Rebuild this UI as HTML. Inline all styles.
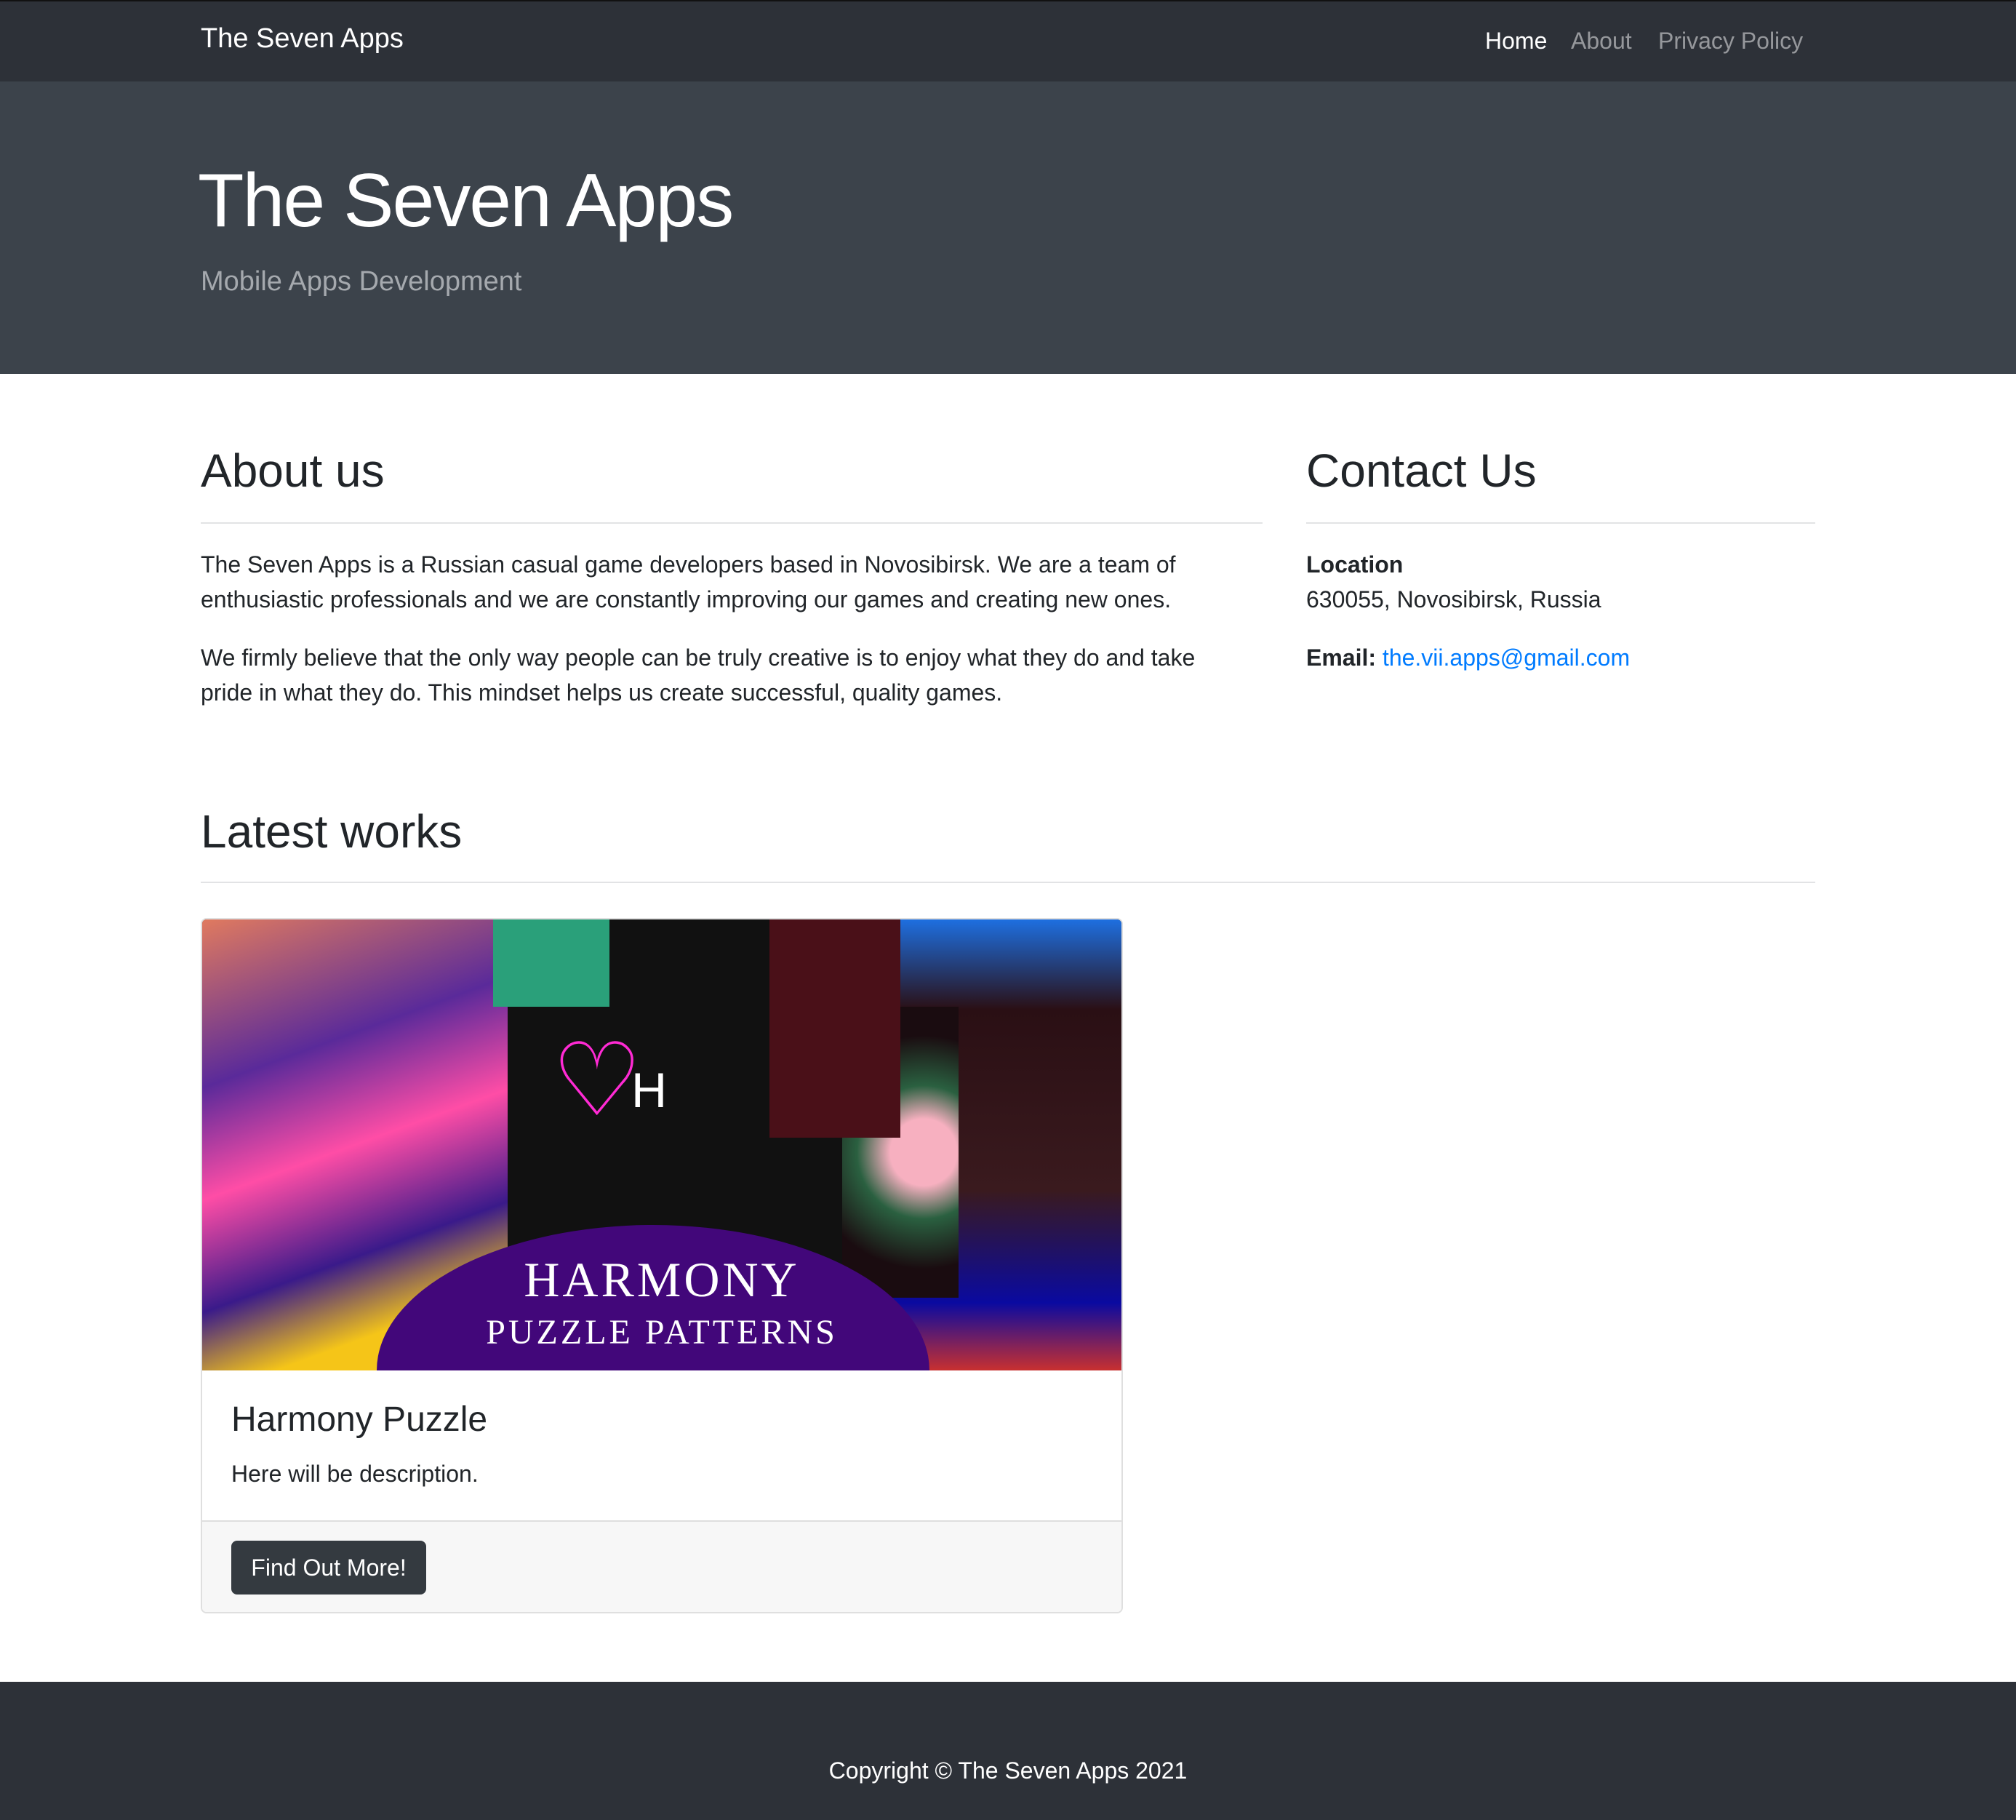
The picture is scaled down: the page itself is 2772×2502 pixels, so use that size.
<!DOCTYPE html>
<html><head><meta charset="utf-8"><style>
html{zoom:2}
body{margin:0;width:1386px;height:1251px;position:relative;font-family:"Liberation Sans",sans-serif;color:#212529;background:#fff;overflow:hidden}
.a{position:absolute;white-space:nowrap}
p{margin:0}
</style></head><body>
<div class="a" style="left:0;top:0;width:1386px;height:56px;background:#2d3138;border-top:1px solid #111"></div>
<div class="a" style="left:138px;top:16px;font-size:19px;color:#fff">The Seven Apps</div>
<div class="a" style="left:1021px;top:19px;font-size:16px;color:#fff">Home</div>
<div class="a" style="left:1080px;top:19px;font-size:16px;color:rgba(255,255,255,.5)">About</div>
<div class="a" style="left:1140px;top:19px;font-size:16px;color:rgba(255,255,255,.5)">Privacy Policy</div>
<div class="a" style="left:0;top:56px;width:1386px;height:201px;background:#3c434b"></div>
<div class="a" style="left:136px;top:107px;font-size:52px;letter-spacing:-1px;color:#fff;line-height:1.2">The Seven Apps</div>
<div class="a" style="left:138px;top:183px;font-size:19px;color:#a5a9ae">Mobile Apps Development</div>

<div class="a" style="left:138px;top:305px;font-size:32px;font-weight:500">About us</div>
<div class="a" style="left:138px;top:359px;width:730px;height:1px;background:#e2e3e5"></div>
<div class="a" style="left:138px;top:376px;width:730px;font-size:16px;line-height:24px;white-space:normal">The Seven Apps is a Russian casual game developers based in Novosibirsk. We are a team of enthusiastic professionals and we are constantly improving our games and creating new ones.</div>
<div class="a" style="left:138px;top:440px;width:715px;font-size:16px;line-height:24px;white-space:normal">We firmly believe that the only way people can be truly creative is to enjoy what they do and take pride in what they do. This mindset helps us create successful, quality games.</div>

<div class="a" style="left:898px;top:305px;font-size:32px;font-weight:500">Contact Us</div>
<div class="a" style="left:898px;top:359px;width:350px;height:1px;background:#e2e3e5"></div>
<div class="a" style="left:898px;top:376px;font-size:16px;line-height:24px"><b>Location</b><br>630055, Novosibirsk, Russia</div>
<div class="a" style="left:898px;top:440px;font-size:16px;line-height:24px"><b>Email:</b> <span style="color:#007bff">the.vii.apps@gmail.com</span></div>

<div class="a" style="left:138px;top:553px;font-size:32px;font-weight:500">Latest works</div>
<div class="a" style="left:138px;top:606px;width:1110px;height:1px;background:#e2e3e5"></div>

<div class="a" style="left:138px;top:631px;width:632px;height:476px;border:1px solid #dfdfdf;border-radius:4px;overflow:hidden">
 <div class="a" style="left:0;top:0;width:632px;height:310px;background:#111;overflow:hidden">
  <div class="a" style="left:0;top:0;width:210px;height:310px;background:linear-gradient(160deg,#e07a5f,#5a2a9a 30%,#ff4da6 50%,#3a1a8a 70%,#f5c518 85%)"></div>
  <div class="a" style="left:460px;top:0;width:172px;height:310px;background:linear-gradient(180deg,#1e6fe0,#2a0f14 20%,#3a1a1e 60%,#0a0aa0 85%,#c83030)"></div>
  <div class="a" style="left:440px;top:60px;width:80px;height:200px;background:radial-gradient(circle at 70% 50%,#f7b0c0 20%,#2a6040 40%,#1a0c10 70%)"></div>
  <div class="a" style="left:200px;top:0;width:80px;height:60px;background:#2aa07a"></div>
  <div class="a" style="left:390px;top:0;width:90px;height:150px;background:#4a1018"></div>
  <div class="a" style="left:120px;top:210px;width:380px;height:200px;border-radius:50%;background:#42077a"></div>
  <div class="a" style="left:240px;top:70px;font-size:70px;color:#ff2ad4">♡</div>
  <div class="a" style="left:295px;top:98px;font-size:34px;color:#fff">H</div>
  <div class="a" style="left:0;top:228px;width:632px;text-align:center;font-size:34px;letter-spacing:2px;color:#fff;font-family:'Liberation Serif',serif">HARMONY</div>
  <div class="a" style="left:0;top:270px;width:632px;text-align:center;font-size:24px;letter-spacing:2px;color:#fff;font-family:'Liberation Serif',serif">PUZZLE PATTERNS</div>
 </div>
 <div class="a" style="left:20px;top:330px;font-size:24px;font-weight:500">Harmony Puzzle</div>
 <div class="a" style="left:20px;top:372px;font-size:16px">Here will be description.</div>
 <div class="a" style="left:0;top:413px;width:632px;height:63px;background:#f7f7f7;border-top:1px solid #dfdfdf"></div>
 <div class="a" style="left:20px;top:427px;width:134px;height:37px;background:#343a40;border-radius:4px;color:#fff;font-size:16px;line-height:37px;text-align:center">Find Out More!</div>
</div>

<div class="a" style="left:0;top:1156px;width:1386px;height:95px;background:#2d3138"></div>
<div class="a" style="left:0;top:1208px;width:1386px;text-align:center;font-size:16px;color:#fff">Copyright © The Seven Apps 2021</div>
</body></html>
